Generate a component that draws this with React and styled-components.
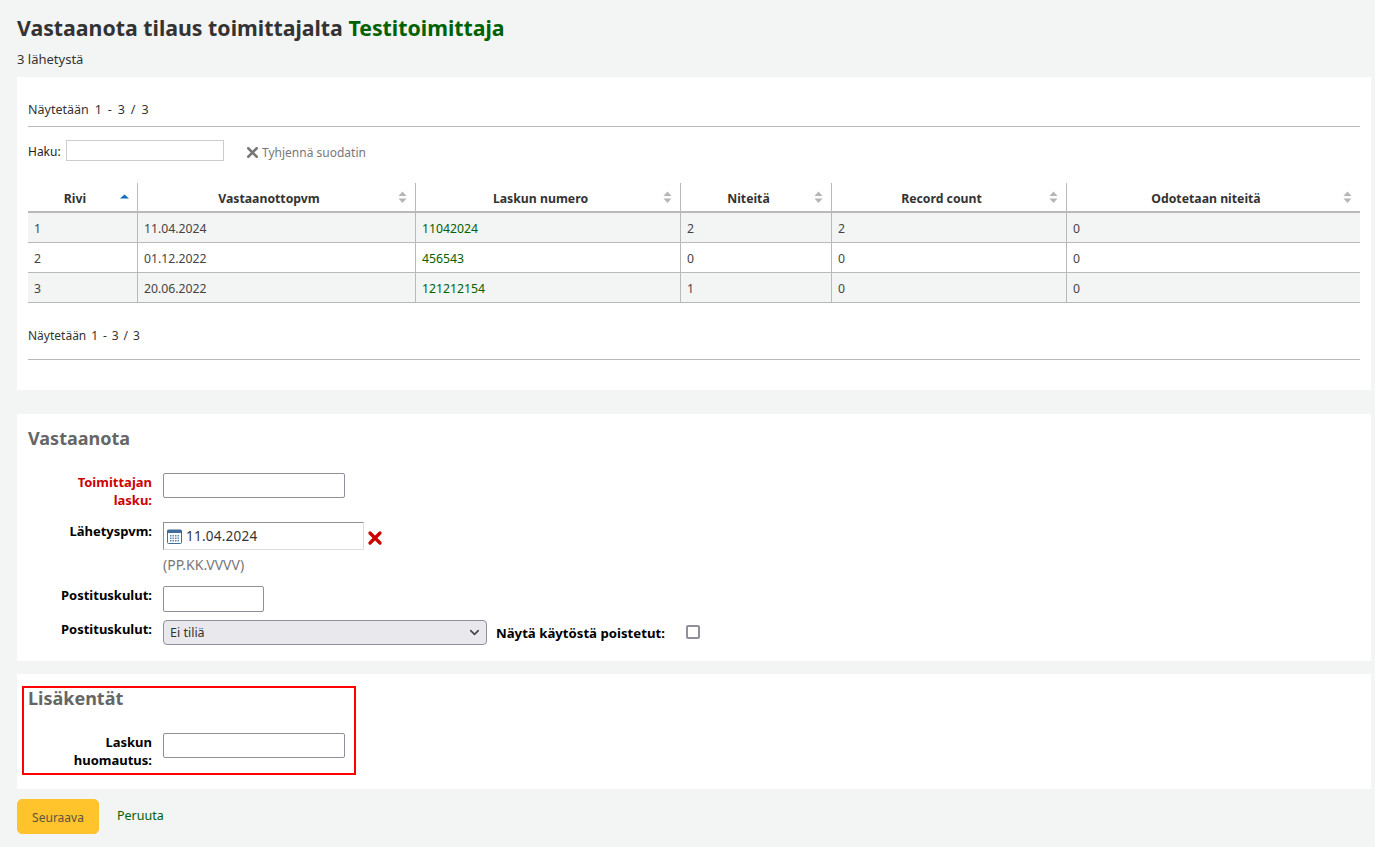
import React from "react";
import styled, { createGlobalStyle } from "styled-components";
import { X, ChevronDown } from "lucide-react";

const Global = createGlobalStyle`
  html, body { margin: 0; padding: 0; background: #f3f4f4; }
  body { font-family: "Noto Sans", "Open Sans", sans-serif; font-size: 12px; color: #333; }
  * { box-sizing: border-box; }
`;

const Page = styled.div`
  width: 1375px;
  height: 847px;
  overflow: hidden;
  padding: 14px 4px 0 17px;
`;
const Title = styled.h1`
  margin: 0;
  font-size: 21.3px;
  line-height: 28px;
  font-weight: 700;
  color: #333;
`;
const Supplier = styled.span`
  color: #006100;
`;
const Count = styled.p`
  margin: 9px 0 0;
  line-height: 17px;
  font-size: 13px;
`;
const Panel = styled.section`
  background: #fff;
  margin-top: ${(p) => p.$top}px;
  height: ${(p) => p.$height}px;
  padding: ${(p) => p.$pad};
`;
const Info = styled.div`
  font-size: ${(p) => p.$size}px;
  line-height: 18px;
  margin-top: ${(p) => p.$top}px;
  padding-bottom: ${(p) => p.$bottom}px;
  border-bottom: 1px solid #b9b9b9;
  word-spacing: ${(p) => p.$spacing}px;
`;
const Filter = styled.div`
  display: flex;
  align-items: center;
  height: 21px;
  margin-top: 13px;
`;
const FilterLabel = styled.span`
  width: 38px;
  flex: none;
  font-size: 12px;
  color: #222;
  padding-top: 2px;
`;
const FilterInput = styled.input`
  width: 158px;
  height: 21px;
  border: 1px solid #ccc;
  background: #fff;
  padding: 0;
`;
const ClearLink = styled.span`
  display: flex;
  align-items: center;
  margin-left: 20px;
  margin-top: 3px;
  color: #777;
  font-size: 12px;
  gap: 1px;
`;
const Table = styled.table`
  margin-top: 22px;
  width: 1332px;
  table-layout: fixed;
  border-collapse: separate;
  border-spacing: 0;
`;
const Th = styled.th`
  position: relative;
  height: 30px;
  padding: 3px 21px 0 6px;
  border-bottom: 2px solid #b9b9b9;
  border-right: ${(p) => (p.$last ? "0" : "1px solid #b9b9b9")};
  font-size: 12.25px;
  font-weight: 700;
  color: #333;
  text-align: center;
`;
const SortMark = styled.svg`
  position: absolute;
  right: 8px;
  top: 8px;
`;
const Td = styled.td`
  height: 30px;
  padding: 1px 6px 0;
  font-size: 12.25px;
  color: #444;
  background: ${(p) => (p.$odd ? "#f3f4f4" : "#fff")};
  border-bottom: 1px solid #b9b9b9;
  border-right: ${(p) => (p.$last ? "0" : "1px solid #b9b9b9")};
`;
const InvoiceLink = styled.span`
  color: #006100;
`;
const Heading = styled.h3`
  margin: ${(p) => p.$top || 0}px 0 0;
  font-size: 18px;
  line-height: 25px;
  font-weight: 700;
  color: #666;
`;
const Row = styled.div`
  display: flex;
  align-items: flex-start;
  margin-top: ${(p) => p.$top}px;
`;
const Label = styled.label`
  width: 124px;
  padding-left: 30px;
  margin-right: 11px;
  flex: none;
  text-align: right;
  font-size: 13px;
  line-height: 18px;
  font-weight: 700;
  color: ${(p) => (p.$required ? "#c00" : "#000")};
`;
const TextInput = styled.input`
  display: block;
  width: ${(p) => p.$width}px;
  height: ${(p) => p.$height}px;
  border: 1px solid #8f8f9d;
  border-radius: 2px;
  background: #fff;
  padding: 0;
`;
const DateField = styled.div`
  display: flex;
  align-items: center;
  width: 201px;
  height: 28px;
  padding-left: 3px;
  border: 1px solid #ddd;
  border-top-color: #8f8f9d;
  border-left-color: #8f8f9d;
  font-size: 13.5px;
  color: #333;
  gap: 4px;
  letter-spacing: 0.25px;
`;
const ClearDate = styled.span`
  display: flex;
  margin-left: 1px;
  margin-top: 6px;
  color: #c00;
`;
const Hint = styled.div`
  margin-top: 6px;
  font-size: 14px;
  line-height: 18px;
  color: #777;
`;
const Select = styled.div`
  display: flex;
  align-items: center;
  justify-content: space-between;
  width: 324px;
  height: 25px;
  padding: 0 4px 0 6px;
  border: 1px solid #8f8f9d;
  border-radius: 4px;
  background: #e9e9ed;
  color: #333;
  font-size: 12.5px;
`;
const InlineLabel = styled.label`
  margin-left: 9px;
  margin-top: 4px;
  font-size: 13.2px;
  line-height: 18px;
  font-weight: 700;
  color: #000;
`;
const Check = styled.span`
  width: 14px;
  height: 14px;
  margin: 5px 0 0 21px;
  border: 2px solid #8f8f9d;
  border-radius: 2px;
  background: #fff;
`;
const MarkedBox = styled.div`
  width: 334px;
  height: 89px;
  margin-left: 5px;
  border: 2px solid #f00;
  padding-left: 4px;
`;
const Actions = styled.div`
  display: flex;
  align-items: flex-start;
  margin-top: 10px;
`;
const Button = styled.button`
  width: 82px;
  height: 35px;
  border: 1px solid #ffc32b;
  border-radius: 5px;
  background: #ffc32b;
  color: #5c5540;
  font: 12px "Noto Sans", sans-serif;
  padding: 2px 0 0;
`;
const Cancel = styled.span`
  margin: 8px 0 0 18px;
  line-height: 18px;
  font-size: 12.5px;
  color: #006100;
`;

const cols = [
  ["Rivi", 110],
  ["Vastaanottopvm", 278],
  ["Laskun numero", 265],
  ["Niteitä", 151],
  ["Record count", 235],
  ["Odotetaan niteitä", 293],
];
const rows = [
  ["1", "11.04.2024", "11042024", "2", "2", "0"],
  ["2", "01.12.2022", "456543", "0", "0", "0"],
  ["3", "20.06.2022", "121212154", "1", "0", "0"],
];

const Sort = ({ active }) =>
  active ? (
    <SortMark width="9" height="14" viewBox="0 0 9 14">
      <path d="M4.5 3.5 L9 7.5 H0 Z" fill="#0a6fc2" />
    </SortMark>
  ) : (
    <SortMark width="9" height="14" viewBox="0 0 9 14">
      <path d="M4.5 0.5 L8.5 5 H0.5 Z" fill="#b5b5b5" />
      <path d="M4.5 12 L8.5 7.5 H0.5 Z" fill="#b5b5b5" />
    </SortMark>
  );

const Calendar = () => (
  <svg width="15" height="15" viewBox="0 0 15 15">
    <rect x="0.5" y="1" width="14" height="13.5" rx="1" fill="#fff" stroke="#3d6f9e" />
    <rect x="0.5" y="1" width="14" height="3" fill="#3d6f9e" />
    {[6, 8.5, 11].map((y) =>
      [3, 5.5, 8, 10.5].map((x) => (
        <rect key={`${x}-${y}`} x={x} y={y} width="1.5" height="1.5" fill="#5a8ab8" />
      ))
    )}
  </svg>
);

export default function App() {
  return (
    <Page>
      <Global />
      <Title>
        Vastaanota tilaus toimittajalta <Supplier>Testitoimittaja</Supplier>
      </Title>
      <Count>3 lähetystä</Count>

      <Panel $top={9} $height={313} $pad="24px 11px 0">
        <Info $size={12.5} $bottom={7} $spacing={2.7} $top={0}>Näytetään 1 - 3 / 3</Info>
        <Filter>
          <FilterLabel>Haku:</FilterLabel>
          <FilterInput />
          <ClearLink>
            <X size={17} strokeWidth={3.5} color="#777" />
            Tyhjennä suodatin
          </ClearLink>
        </Filter>
        <Table>
          <colgroup>
            {cols.map(([name, w]) => (
              <col key={name} width={w} />
            ))}
          </colgroup>
          <thead>
            <tr>
              {cols.map(([name], i) => (
                <Th key={name} $last={i === cols.length - 1}>
                  {name}
                  <Sort active={i === 0} />
                </Th>
              ))}
            </tr>
          </thead>
          <tbody>
            {rows.map((r, ri) => (
              <tr key={r[0]}>
                {r.map((c, i) => (
                  <Td key={i} $odd={ri % 2 === 0} $last={i === r.length - 1}>
                    {i === 2 ? <InvoiceLink>{c}</InvoiceLink> : c}
                  </Td>
                ))}
              </tr>
            ))}
          </tbody>
        </Table>
        <Info $size={12} $bottom={14} $spacing={1.8} $top={24}>
          Näytetään 1 - 3 / 3
        </Info>
      </Panel>

      <Panel $top={24} $height={247} $pad="12px 11px 0">
        <Heading>Vastaanota</Heading>
        <Row $top={22}>
          <Label $required>Toimittajan lasku:</Label>
          <TextInput $width={182} $height={25} />
        </Row>
        <Row $top={13}>
          <Label>Lähetyspvm:</Label>
          <div>
            <Row $top={0}>
              <DateField>
                <Calendar />
                11.04.2024
              </DateField>
              <ClearDate>
                <X size={20} strokeWidth={4} />
              </ClearDate>
            </Row>
            <Hint>(PP.KK.VVVV)</Hint>
          </div>
        </Row>
        <Row $top={12}>
          <Label>Postituskulut:</Label>
          <TextInput $width={101} $height={26} />
        </Row>
        <Row $top={8}>
          <Label>Postituskulut:</Label>
          <Select>
            Ei tiliä
            <ChevronDown size={15} strokeWidth={2.5} color="#444" />
          </Select>
          <InlineLabel>Näytä käytöstä poistetut:</InlineLabel>
          <Check />
        </Row>
      </Panel>

      <Panel $top={13} $height={115} $pad="12px 0 0">
        <MarkedBox>
          <Heading $top={-2}>Lisäkentät</Heading>
          <Row $top={22}>
            <Label>Laskun huomautus:</Label>
            <TextInput $width={182} $height={25} />
          </Row>
        </MarkedBox>
      </Panel>

      <Actions>
        <Button>Seuraava</Button>
        <Cancel>Peruuta</Cancel>
      </Actions>
    </Page>
  );
}
